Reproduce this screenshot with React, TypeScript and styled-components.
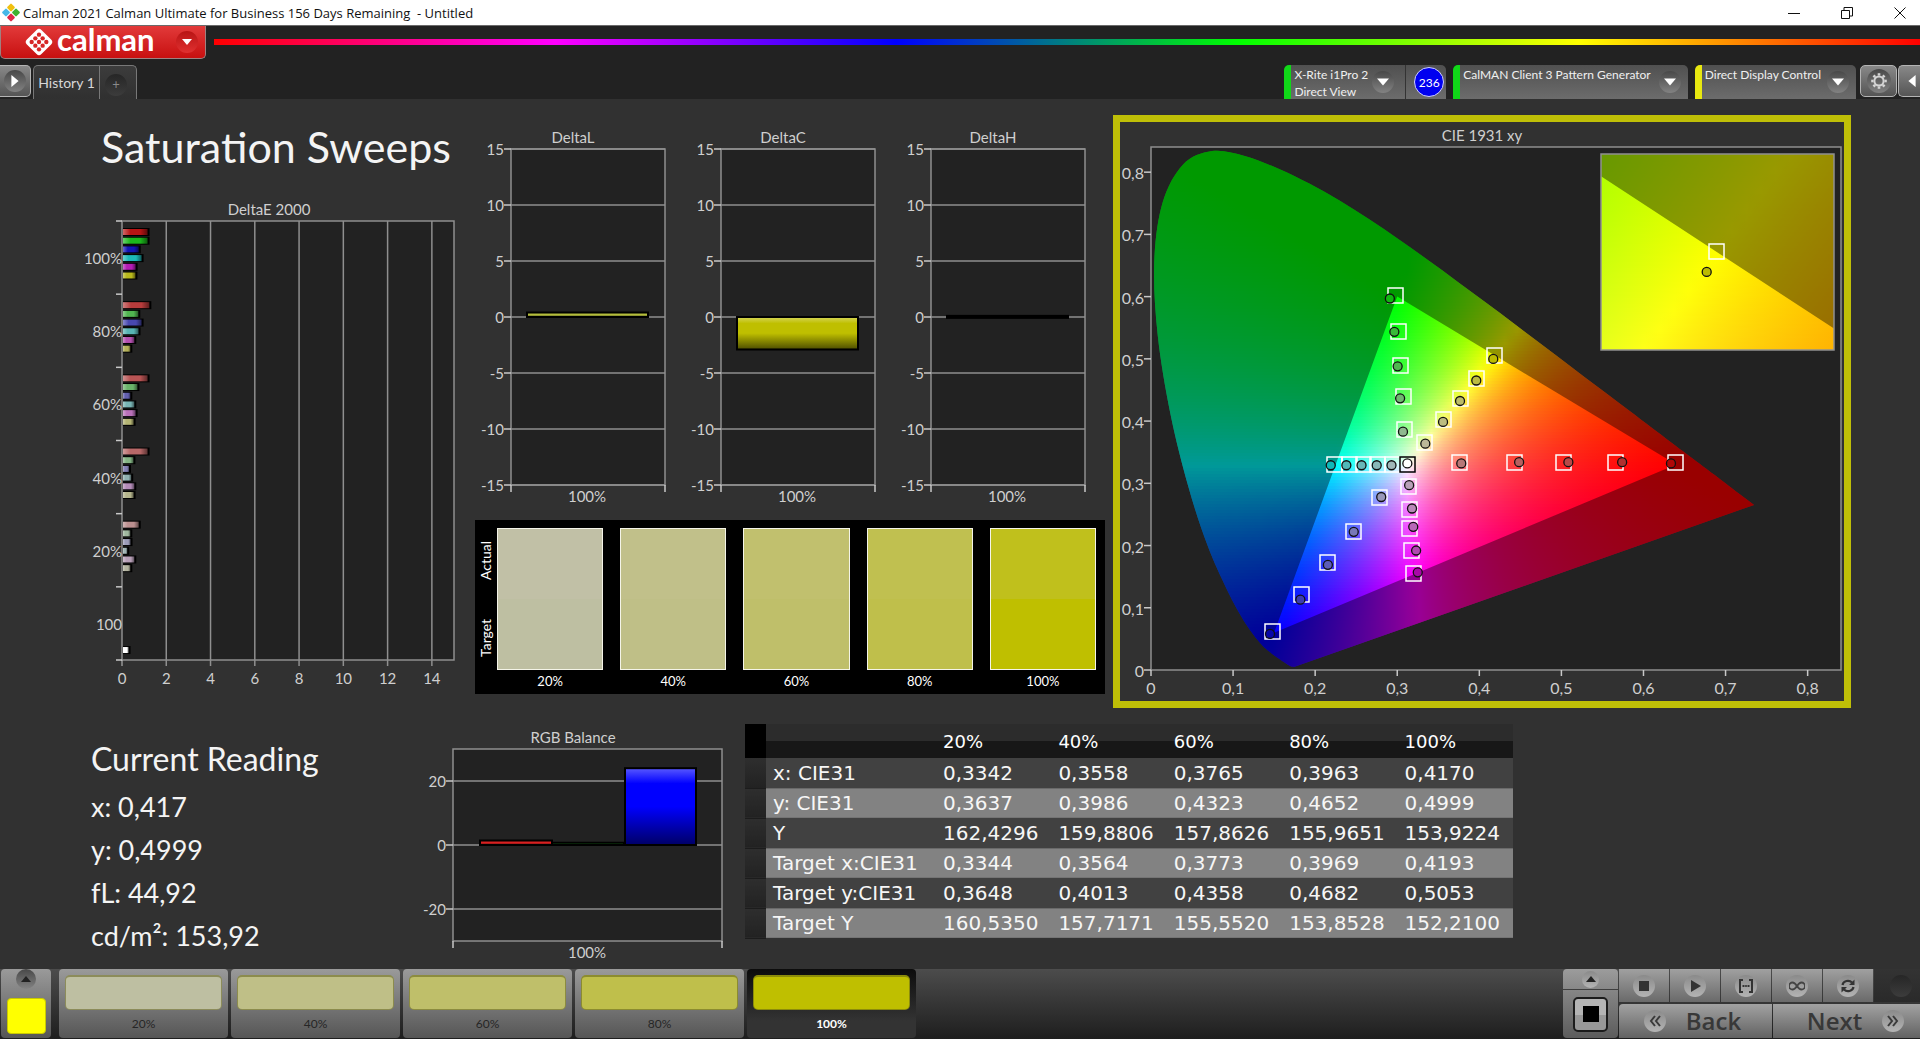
import React from "react";
import styled, { createGlobalStyle, css } from "styled-components";

const GlobalStyle = createGlobalStyle`
  *, *::before, *::after { box-sizing: border-box; }
  body { margin: 0; background: #313131; }
  button { font: inherit; color: inherit; border: 0; padding: 0; margin: 0; cursor: pointer; }
  svg { display: block; }
`;

const uiFont = `Lato, "Open Sans", sans-serif`;

/* ---------- data ---------- */

const levels = [
  { label: "20%", actual: "#c1c0a6", target: "#bebfa2" },
  { label: "40%", actual: "#c1c08a", target: "#bfbf87" },
  { label: "60%", actual: "#c1c06e", target: "#bfbf6a" },
  { label: "80%", actual: "#c0c050", target: "#bfbf4b" },
  { label: "100%", actual: "#c0c01c", target: "#bfbf00" },
];

const tableRows = [
  ["x: CIE31", "0,3342", "0,3558", "0,3765", "0,3963", "0,4170"],
  ["y: CIE31", "0,3637", "0,3986", "0,4323", "0,4652", "0,4999"],
  ["Y", "162,4296", "159,8806", "157,8626", "155,9651", "153,9224"],
  ["Target x:CIE31", "0,3344", "0,3564", "0,3773", "0,3969", "0,4193"],
  ["Target y:CIE31", "0,3648", "0,4013", "0,4358", "0,4682", "0,5053"],
  ["Target Y", "160,5350", "157,7171", "155,5520", "153,8528", "152,2100"],
];

const deltaE = [
  { label: "100%", values: [1.2, 1.2, 0.8, 0.93, 0.66, 0.65], colors: ["#b81414", "#1cb81c", "#1414b4", "#1cb8b8", "#b41cb4", "#b8b81c"] },
  { label: "80%", values: [1.28, 0.78, 0.93, 0.79, 0.6, 0.42], colors: ["#b83c3c", "#50b450", "#4848b0", "#58b4b4", "#b450b0", "#b4b058"] },
  { label: "60%", values: [1.2, 0.74, 0.42, 0.6, 0.66, 0.57], colors: ["#b85454", "#6ab46a", "#6460b0", "#78b4b4", "#b870b8", "#b4b474"] },
  { label: "40%", values: [1.2, 0.56, 0.36, 0.46, 0.6, 0.57], colors: ["#b86868", "#84b484", "#8480b4", "#90b0b0", "#b48cb8", "#b4b48c"] },
  { label: "20%", values: [0.8, 0.42, 0.43, 0.28, 0.6, 0.42], colors: ["#bc9090", "#a0b8a0", "#9c9cb8", "#a0b4b4", "#b8a0b8", "#b4b4a0"] },
  { label: "100", values: [0, 0, 0, 0, 0, 0, 0.34], colors: ["", "", "", "", "", "", "#ffffff"] },
];

type Pt = [number, number];

const targets: Pt[] = [
  [0.309, 0.386], [0.308, 0.439], [0.304, 0.489], [0.302, 0.543], [0.2985, 0.601],
  [0.3344, 0.3648], [0.3564, 0.4013], [0.3773, 0.4358], [0.3969, 0.4682], [0.4193, 0.5053],
  [0.295, 0.329], [0.277, 0.329], [0.2595, 0.329], [0.242, 0.329], [0.224, 0.329],
  [0.377, 0.332], [0.4435, 0.332], [0.503, 0.332], [0.5665, 0.332], [0.6395, 0.332],
  [0.3145, 0.2945], [0.316, 0.2575], [0.316, 0.227], [0.318, 0.192], [0.32, 0.155],
  [0.279, 0.276], [0.247, 0.222], [0.2155, 0.1715], [0.184, 0.12], [0.1485, 0.0615],
];

const readings: { at: Pt; color: string }[] = [
  { at: [0.307, 0.383], color: "#8fb88f" }, { at: [0.3035, 0.4365], color: "#70b870" },
  { at: [0.3005, 0.488], color: "#4fb84f" }, { at: [0.2965, 0.5435], color: "#38b838" },
  { at: [0.291, 0.597], color: "#10b810" },
  { at: [0.3342, 0.3637], color: "#bcb898" }, { at: [0.3558, 0.3986], color: "#bcbc80" },
  { at: [0.3765, 0.4323], color: "#bcbc68" }, { at: [0.3963, 0.4652], color: "#bcbc40" },
  { at: [0.417, 0.4999], color: "#bcbc00" },
  { at: [0.293, 0.329], color: "#a0b8b8" }, { at: [0.275, 0.329], color: "#88b8b8" },
  { at: [0.2565, 0.329], color: "#68b8b8" }, { at: [0.238, 0.329], color: "#50b8b8" },
  { at: [0.219, 0.329], color: "#10b8b8" },
  { at: [0.378, 0.332], color: "#b87878" }, { at: [0.4485, 0.334], color: "#b86060" },
  { at: [0.5085, 0.334], color: "#b84848" }, { at: [0.574, 0.334], color: "#b03030" },
  { at: [0.6335, 0.332], color: "#b00808" },
  { at: [0.3145, 0.297], color: "#b8a0b8" }, { at: [0.318, 0.2595], color: "#b888b8" },
  { at: [0.3195, 0.23], color: "#b868b8" }, { at: [0.323, 0.192], color: "#b048b0" },
  { at: [0.325, 0.157], color: "#a808a8" },
  { at: [0.2805, 0.278], color: "#9898b8" }, { at: [0.247, 0.222], color: "#7878b8" },
  { at: [0.2155, 0.169], color: "#5c5cb8" }, { at: [0.182, 0.113], color: "#3c3cb0" },
  { at: [0.145, 0.058], color: "#0808a8" },
];

const locus: Pt[] = [
  [0.1741, 0.005], [0.1689, 0.0069], [0.1566, 0.0177], [0.144, 0.0297], [0.1355, 0.0399],
  [0.1241, 0.0578], [0.1096, 0.0868], [0.0913, 0.1327], [0.0687, 0.2007], [0.0454, 0.295],
  [0.0235, 0.4127], [0.0082, 0.5384], [0.0039, 0.6548], [0.0139, 0.7502], [0.0389, 0.812],
  [0.0743, 0.8338], [0.1142, 0.8262], [0.1547, 0.8059], [0.1929, 0.7816], [0.2296, 0.7543],
  [0.2658, 0.7243], [0.3016, 0.6923], [0.3373, 0.6589], [0.3731, 0.6245], [0.4087, 0.5896],
  [0.4441, 0.5547], [0.4788, 0.5202], [0.5125, 0.4866], [0.5448, 0.4544], [0.5752, 0.4242],
  [0.6029, 0.3965], [0.627, 0.3725], [0.6482, 0.3514], [0.6801, 0.3197], [0.7006, 0.2993],
  [0.726, 0.274], [0.7347, 0.2653],
];

const gamut: Pt[] = [[0.3, 0.6], [0.64, 0.33], [0.15, 0.06]];

/* ---------- window chrome ---------- */

const Window = styled.div`
  min-height: 100vh;
  display: flex;
  flex-direction: column;
  background: #313131;
  color: #e6e6e6;
  font-family: ${uiFont};
  overflow: hidden;
`;

const TitleBar = styled.header`
  display: flex;
  align-items: center;
  height: 25px;
  padding: 0 0 0 2px;
  background: #fff;
  color: #111;
  font-family: "Open Sans", "Noto Sans", sans-serif;
`;

const WindowTitle = styled.span`
  flex: 1;
  padding-left: 3px;
  font-size: 13px;
  white-space: pre;
`;

const WindowButtons = styled.div`
  display: flex;
  gap: 13px;
`;

const WindowButton = styled.button`
  display: grid;
  place-items: center;
  width: 40px;
  height: 25px;
  background: transparent;
`;

const BrandBar = styled.div`
  display: flex;
  align-items: flex-start;
  gap: 8px;
  height: 40px;
  background: #222;
  border-top: 1px solid #6a6a6a;
`;

const BrandButton = styled.button`
  display: flex;
  align-items: center;
  width: 206px;
  height: 33px;
  padding: 0 7px 0 22px;
  border: 1px solid #a08080;
  border-top: 0;
  border-radius: 0 0 5px 5px;
  background: linear-gradient(#e23a3a, #c81010);
  color: #fff;
`;

const BrandName = styled.span`
  flex: 1;
  padding: 0 0 6px 2px;
  text-align: left;
  font-family: Lato, sans-serif;
  font-size: 31px;
  font-weight: 700;
  line-height: 30px;
`;

const Knob = styled.span<{ $size: number; $tone?: "red" | "dark" | "light" | "off" }>`
  display: grid;
  place-items: center;
  flex: none;
  width: ${(p) => p.$size}px;
  height: ${(p) => p.$size}px;
  border-radius: 50%;
  background: ${(p) =>
    p.$tone === "red"
      ? "linear-gradient(#b81414, #e03030)"
      : p.$tone === "light"
        ? "linear-gradient(#8a8a8a, #b4b4b4)"
        : p.$tone === "off"
          ? "linear-gradient(#262626, #3c3c3c)"
          : "linear-gradient(#484848, #828282)"};
`;

const Spectrum = styled.div`
  flex: 1;
  height: 6px;
  margin-top: 13px;
  background: linear-gradient(to right, #f00, #f0f 20%, #00f 40%, #0f0 60%, #ff0 80%, #f00);
`;

const TabBar = styled.nav`
  display: flex;
  align-items: flex-end;
  height: 34px;
  background: #222;
  font-size: 13px;
  line-height: 17px;
`;

const SideButton = styled.button<{ $side?: "left" | "right" }>`
  display: grid;
  place-items: center;
  align-self: flex-start;
  flex: none;
  width: ${(p) => (p.$side ? 31 : 37)}px;
  height: 32px;
  border: 1px solid #b4b4b4;
  border-radius: 5px;
  background: linear-gradient(#888, #555);
  ${(p) => p.$side === "left" && css`border-left: 0; border-radius: 0 5px 5px 0;`}
  ${(p) => p.$side === "right" && css`width: 22px; padding-left: 5px; border-right: 0; border-radius: 5px 0 0 5px;`}
`;

const HistoryTabs = styled.div`
  display: flex;
  height: 34px;
  margin-left: 2px;
  border: 1px solid #787878;
  border-bottom: 0;
  border-radius: 5px 5px 0 0;
  background: linear-gradient(#3c3c3c, #303030);
`;

const HistoryTab = styled.button`
  display: grid;
  place-items: center;
  width: 66px;
  background: transparent;
  color: #d8d8d8;
  font-size: 14px;
  border-right: 1px solid #787878;
`;

const AddTab = styled.button`
  display: grid;
  place-items: center;
  width: 36px;
  padding: 4px 4px 0 0;
  background: transparent;
  color: #8a8a8a;
`;

const Devices = styled.div`
  display: flex;
  gap: 7px;
  margin-left: auto;
`;

const Device = styled.div<{ $stripe: string }>`
  display: flex;
  height: 34px;
  border-left: 7px solid ${(p) => p.$stripe};
  border-radius: 5px 5px 0 0;
  background: linear-gradient(#505050, #6c6c6c);
  color: #f0f0f0;
`;

const DeviceSelect = styled.button<{ $gap: number }>`
  display: flex;
  align-items: center;
  gap: ${(p) => p.$gap}px;
  padding: 0 7px 0 3px;
  background: transparent;
  text-align: left;
  white-space: nowrap;
`;

const DeviceName = styled.span`
  align-self: flex-start;
  padding-top: 1px;
  font-size: 12px;
`;

const MeterCount = styled.span`
  display: flex;
  align-items: center;
  margin-left: 4px;
  padding: 0 2px 0 8px;
  border-left: 1px solid #333;
`;

const MeterBadge = styled.span`
  display: grid;
  place-items: center;
  width: 30px;
  height: 30px;
  border: 1px solid #d0d0ff;
  border-radius: 50%;
  background: #0000f0;
  color: #fff;
  font-size: 12px;
`;

const EdgeButtons = styled.div`
  display: flex;
  align-self: flex-start;
  gap: 1px;
  margin-left: 4px;
`;

/* ---------- workspace ---------- */

const Workspace = styled.main`
  flex: 1;
  background: #313131;
`;

const UpperRow = styled.div`
  display: grid;
  grid-template-columns: 475fr 630fr 746fr 69fr;
  align-items: start;
`;

const LowerRow = styled.div`
  display: grid;
  grid-template-columns: 405fr 340fr 768fr 407fr;
  align-items: start;
`;

const Column = styled.section`
  min-width: 0;
`;

const PageTitle = styled.h1`
  margin: 0;
  padding-left: 101px;
  font-size: 43px;
  font-weight: 400;
  line-height: 96px;
  color: #f4f4f4;
  white-space: nowrap;
`;

const ChartRow = styled.div`
  display: grid;
  grid-template-columns: repeat(3, 1fr);
  padding-top: 26px;
`;

const Chart = styled.svg<{ $text?: number }>`
  width: 100%;
  height: auto;
  font-family: ${uiFont};
  font-size: ${(p) => p.$text ?? 15}px;
  fill: #cfcfcf;
`;

const SwatchPanel = styled.div`
  display: flex;
  margin-top: 10px;
  height: 174px;
  padding: 8px 9px 0 0;
  background: #000;
  color: #fff;
  font-size: 13px;
`;

const SwatchSides = styled.div`
  display: flex;
  justify-content: space-between;
  width: 22px;
  height: 142px;
  padding: 13px 0;
  writing-mode: vertical-rl;
  transform: rotate(180deg);
  font-size: 14px;
  line-height: 22px;
`;

const SwatchList = styled.div`
  flex: 1;
  display: grid;
  grid-template-columns: repeat(5, 1fr);
  gap: 17px;
`;

const SwatchItem = styled.figure`
  margin: 0;
  text-align: center;
`;

const SwatchColor = styled.div<{ $actual: string; $target: string }>`
  height: 142px;
  border: 1px solid #f4f4e8;
  background: linear-gradient(${(p) => p.$actual} 50%, ${(p) => p.$target} 50%);
`;

const SwatchCaption = styled.figcaption`
  line-height: 22px;
`;

const CiePanel = styled.div`
  margin: 16px 0 0 8px;
  border: 7px solid #bfbf07;
`;

const Reading = styled.section`
  padding: 33px 0 0 91px;
  color: #f4f4f4;
  white-space: nowrap;
`;

const ReadingTitle = styled.h2`
  margin: 0 0 8px;
  font-size: 32px;
  font-weight: 400;
  line-height: 36px;
`;

const ReadingValue = styled.p`
  margin: 0;
  font-size: 27px;
  line-height: 43px;
`;

const RgbSection = styled.section`
  padding-top: 17px;
`;

const DataTable = styled.table`
  width: 100%;
  margin-top: 16px;
  border-collapse: collapse;
  table-layout: fixed;
  font-family: "DejaVu Sans", sans-serif;
  font-size: 20px;
  text-align: left;
  white-space: nowrap;
`;

const GutterCol = styled.col`
  width: 21px;
`;

const NameCol = styled.col`
  width: 170px;
`;

const HeadCell = styled.th`
  height: 34px;
  padding: 0 7px;
  font-size: 18px;
  font-weight: 400;
  color: #fff;
  background: linear-gradient(#2c2c2c 50%, #171717 50%);
`;

const HeadGutter = styled.td`
  padding: 0;
  background: #000;
`;

const Gutter = styled.td`
  padding: 0;
  border-bottom: 1px solid #1c1c1c;
  background: linear-gradient(#2e2e2e, #222);
`;

const rowCell = css`
  height: 30px;
  padding: 0 7px;
  font-weight: 400;
  color: #f6f6f6;
`;

const NameCell = styled.th`
  ${rowCell}
`;

const ValueCell = styled.td`
  ${rowCell}
`;

const Row = styled.tr`
  height: 30px;
  ${NameCell}, ${ValueCell} { background: #414141; }
  &:nth-child(even) ${NameCell}, &:nth-child(even) ${ValueCell} {
    background: #828282;
    box-shadow: inset 0 1px #6a6a6a, inset 0 -1px #747474;
  }
`;

/* ---------- bottom bar ---------- */

const BottomBar = styled.footer`
  display: flex;
  height: 70px;
  padding-left: 1px;
  background: linear-gradient(#4c4c4c, #1e1e1e);
`;

const metal = "linear-gradient(#9a9a9a, #565656)";

const CurrentColor = styled.button`
  display: flex;
  flex-direction: column;
  align-items: center;
  gap: 9px;
  width: 50px;
  height: 69px;
  margin-right: 8px;
  border-radius: 4px;
  background: ${metal};
`;

const CurrentSwatch = styled.span`
  width: 39px;
  height: 36px;
  border: 1px solid #c8c800;
  border-radius: 4px;
  background: #ff0;
`;

const Levels = styled.div`
  display: flex;
  gap: 3px;
`;

const LevelButton = styled.button<{ $active: boolean }>`
  display: flex;
  flex-direction: column;
  width: 169px;
  height: 69px;
  padding: 6px 6px 0;
  border-radius: 4px;
  background: ${(p) => (p.$active ? "linear-gradient(#0c0c0c, #333 75%)" : metal)};
  color: ${(p) => (p.$active ? "#fff" : "#262626")};
  font-size: 12px;
  font-weight: ${(p) => (p.$active ? 700 : 400)};
  line-height: 28px;
  text-align: center;
`;

const LevelColor = styled.span<{ $color: string }>`
  height: 41px;
  border: 1px solid rgba(90, 90, 20, 0.5);
  border-top-width: 2px;
  border-radius: 5px;
  background: ${(p) => p.$color};
`;

const Transport = styled.div`
  display: flex;
  gap: 1px;
  margin-left: auto;
`;

const StopColumn = styled.div`
  display: flex;
  flex-direction: column;
  gap: 1px;
  width: 55px;
  height: 69px;
`;

const StopMenu = styled.button`
  display: grid;
  place-items: center;
  height: 20px;
  border-radius: 4px 4px 0 0;
  background: linear-gradient(#9c9c9c, #888);
`;

const StopButton = styled.button`
  display: grid;
  place-items: center;
  flex: 1;
  border-radius: 0 0 4px 4px;
  background: linear-gradient(#868686, #5c5c5c);
`;

const StopIcon = styled.span`
  display: grid;
  place-items: center;
  width: 35px;
  height: 35px;
  border: 2px solid #1c1c1c;
  border-radius: 5px;
  background: linear-gradient(#b4b4b4 50%, #989898 50%);
  &::after {
    content: "";
    width: 16px;
    height: 16px;
    background: #000;
  }
`;

const ControlGrid = styled.div`
  display: grid;
  grid-template-columns: 153px 147px;
  gap: 1px;
`;

const ToolRow = styled.div`
  grid-column: 1 / -1;
  display: grid;
  grid-template-columns: repeat(5, 50px) 46px;
  gap: 1px;
  height: 33px;
`;

const ToolButton = styled.button<{ $off?: boolean }>`
  display: grid;
  place-items: center;
  padding-left: ${(p) => (p.$off ? 8 : 0)}px;
  background: ${(p) => (p.$off ? "linear-gradient(#333, #2a2a2a)" : "linear-gradient(#a0a0a0, #6a6a6a)")};
`;

const NavButton = styled.button<{ $forward?: boolean }>`
  display: flex;
  align-items: center;
  justify-content: center;
  gap: 20px;
  height: 34px;
  padding: ${(p) => (p.$forward ? "0 0 0 18px" : "0 6px 0 0")};
  border-radius: ${(p) => (p.$forward ? 0 : "4px 0 0 0")};
  background: linear-gradient(#a2a2a2, #626262);
  color: #383838;
  font-family: "Open Sans", sans-serif;
  font-size: 24px;
  font-weight: 600;
  line-height: 32px;
`;

/* ---------- icons ---------- */

const Triangle = ({ dir, size = 10, color = "#fff" }: { dir: "up" | "down" | "left" | "right"; size?: number; color?: string }) => {
  const d = {
    down: "M0 2H10L5 8Z",
    up: "M0 8H10L5 2Z",
    right: "M2 0V10L8 5Z",
    left: "M8 0V10L2 5Z",
  }[dir];
  return (
    <svg width={size} height={size} viewBox="0 0 10 10" aria-hidden="true">
      <path d={d} fill={color} />
    </svg>
  );
};

const AppIcon = () => (
  <svg width="18" height="19" viewBox="0 0 18 18" aria-hidden="true">
    <rect x="6" y="1" width="6" height="6" rx="1" transform="rotate(45 9 4)" fill="#f0c010" />
    <rect x="1" y="6" width="6" height="6" rx="1" transform="rotate(45 4 9)" fill="#48b8e8" />
    <rect x="11" y="6" width="6" height="6" rx="1" transform="rotate(45 14 9)" fill="#40b030" />
    <rect x="6" y="11" width="6" height="6" rx="1" transform="rotate(45 9 14)" fill="#e02848" />
  </svg>
);

const BrandIcon = () => (
  <svg width="32" height="32" viewBox="0 0 28 28" aria-hidden="true">
    <rect x="5" y="5" width="18" height="18" rx="3" transform="rotate(45 14 14)" fill="#fff" />
    <g fill="#d62626">
      <circle cx="14" cy="7.6" r="1.9" />
      <circle cx="10.8" cy="10.8" r="1.9" />
      <circle cx="17.2" cy="10.8" r="1.9" />
      <circle cx="7.6" cy="14" r="1.9" />
      <circle cx="14" cy="14" r="1.9" />
      <circle cx="20.4" cy="14" r="1.9" />
      <circle cx="10.8" cy="17.2" r="1.9" />
      <circle cx="17.2" cy="17.2" r="1.9" />
      <circle cx="14" cy="20.4" r="1.9" />
    </g>
  </svg>
);

const GearIcon = () => (
  <svg width="18" height="18" viewBox="0 0 18 18" aria-hidden="true" fill="none" stroke="#d4d4d4">
    <circle cx="9" cy="9" r="4.6" strokeWidth="2" />
    {[0, 45, 90, 135, 180, 225, 270, 315].map((a) => (
      <path key={a} d="M9 3.6V1.2" strokeWidth="2.6" transform={`rotate(${a} 9 9)`} />
    ))}
  </svg>
);

const Chevrons = ({ flip }: { flip?: boolean }) => (
  <svg width="12" height="12" viewBox="0 0 12 12" fill="none" stroke="#3a3a3a" strokeWidth="2" aria-hidden="true">
    <path d={flip ? "M1 1L5 6L1 11M6 1L10 6L6 11" : "M6 1L2 6L6 11M11 1L7 6L11 11"} />
  </svg>
);

const toolIcons: { name: string; icon: React.ReactNode }[] = [
  { name: "Stop", icon: <rect x="3" y="3" width="10" height="10" fill="#333" /> },
  { name: "Play", icon: <path d="M4 2V14L14 8Z" fill="#333" /> },
  {
    name: "Read series",
    icon: (
      <g fill="none" stroke="#333" strokeWidth="2">
        <path d="M5 2H2V14H5M11 2H14V14H11" />
        <path d="M4.5 8H6.5M7.2 8H8.8M9.5 8H11.5" />
      </g>
    ),
  },
  {
    name: "Read continuous",
    icon: <path d="M8 8C6 5 5 4.500 3.500 4.500A3.500 3.500 0 0 0 3.500 11.500C5 11.500 6 11 8 8S11 4.500 12.500 4.500A3.500 3.500 0 0 1 12.500 11.500C11 11.500 10 11 8 8Z" fill="none" stroke="#444" strokeWidth="1.800" />,
  },
  {
    name: "Refresh",
    icon: (
      <g>
        <path d="M2.500 7A5.500 5 0 0 1 12 4.500M13.500 9A5.500 5 0 0 1 4 11.500" fill="none" stroke="#333" strokeWidth="2.200" />
        <path d="M14.500 1.500V7H9ZM1.500 14.500V9H7Z" fill="#333" />
      </g>
    ),
  },
];

/* ---------- charts ---------- */

const shade = (hex: string, k: number) =>
  "#" +
  [1, 3, 5]
    .map((i) => parseInt(hex.slice(i, i + 2), 16))
    .map((v) => Math.round(k < 0 ? v * (1 + k) : v + (255 - v) * k).toString(16).padStart(2, "0"))
    .join("");

const axis = "#8f8f8f";
const tick = "#c8c8c8";

function DeltaEChart() {
  const left = 122, right = 454, top = 26, bottom = 465;
  const unit = (right - left) / 15;
  const band = (bottom - top) / deltaE.length;
  return (
    <Chart viewBox="0 0 475 500" role="img" aria-label="DeltaE 2000">
      <text x="269" y="20" textAnchor="middle">DeltaE 2000</text>
      <rect x={left} y={top} width={right - left} height={bottom - top} fill="#222" />
      {[2, 4, 6, 8, 10, 12, 14].map((v) => (
        <line key={v} x1={left + v * unit} x2={left + v * unit} y1={top} y2={bottom + 6} stroke={axis} strokeWidth="1.5" />
      ))}
      {deltaE.map((g, gi) =>
        g.values.map((v, i) => {
          if (!v) return null;
          const y = top + gi * band + 11 + i * 8.7;
          const id = `de-${gi}-${i}`;
          return (
            <g key={id}>
              <linearGradient id={id}>
                <stop offset="0" stopColor={shade(g.colors[i], 0.35)} />
                <stop offset="0.3" stopColor={g.colors[i]} />
                <stop offset="0.7" stopColor={g.colors[i]} />
                <stop offset="1" stopColor={shade(g.colors[i], -0.5)} />
              </linearGradient>
              <rect x={left} y={y - 4} width={v * unit + 1} height="8" fill="#000" />
              <rect x={left + 1} y={y - 3} width={v * unit - 2} height="6" fill={`url(#${id})`} />
            </g>
          );
        })
      )}
      <rect x={left} y={top} width={right - left} height={bottom - top} fill="none" stroke={axis} strokeWidth="1.5" />
      {[0, 1, 2, 3, 4, 5, 6].map((i) => (
        <line key={i} x1={left - 6} x2={left} y1={top + i * band} y2={top + i * band} stroke={tick} strokeWidth="1.5" />
      ))}
      <line x1={left} x2={left} y1={bottom} y2={bottom + 6} stroke={tick} />
      {deltaE.map((g, i) => (
        <text key={g.label} x={left} y={top + i * band + 43} textAnchor="end">{g.label}</text>
      ))}
      {[0, 2, 4, 6, 8, 10, 12, 14].map((v) => (
        <text key={v} x={left + v * unit} y={bottom + 24} textAnchor="middle">{v}</text>
      ))}
    </Chart>
  );
}

type Bar = { x: number; w: number; value: number; color: string };

type BarChartProps = {
  title: string;
  titleX: number;
  labelX: number;
  width: number;
  height: number;
  left: number;
  right: number;
  top: number;
  bottom: number;
  max: number;
  ticks: number[];
  bars: Bar[];
};

function BarChart({ title, titleX, labelX, width, height, left, right, top, bottom, max, ticks, bars }: BarChartProps) {
  const unit = (bottom - top) / (2 * max);
  const toY = (v: number) => (top + bottom) / 2 - v * unit;
  return (
    <Chart viewBox={`0 0 ${width} ${height}`} role="img" aria-label={title}>
      <text x={titleX} y={top - 6} textAnchor="middle">{title}</text>
      <rect x={left} y={top} width={right - left} height={bottom - top} fill="#222" stroke={axis} strokeWidth="1.5" />
      {ticks.map((v) => (
        <g key={v}>
          <line x1={left} x2={right} y1={toY(v)} y2={toY(v)} stroke={axis} strokeWidth="1.5" />
          <line x1={left - 7} x2={left} y1={toY(v)} y2={toY(v)} stroke={tick} strokeWidth="1.5" />
          <text x={left - 7} y={toY(v) + 6} textAnchor="end">{v}</text>
        </g>
      ))}
      <path d={`M${left} ${bottom}v7M${right} ${bottom}v7`} stroke={tick} strokeWidth="1.5" />
      {bars.map((b, i) => {
        const y = Math.min(toY(0), toY(b.value));
        const h = Math.max(2, Math.abs(b.value) * unit);
        const id = `${title.replace(" ", "")}-${i}`;
        return (
          <g key={id}>
            <linearGradient id={id} x2="0" y2="1">
              <stop offset="0" stopColor={shade(b.color, 0.35)} />
              <stop offset="0.2" stopColor={b.color} />
              <stop offset="0.5" stopColor={b.color} />
              <stop offset="1" stopColor={shade(b.color, -0.6)} />
            </linearGradient>
            <rect x={b.x} y={y} width={b.w} height={h} fill={`url(#${id})`} stroke="#000" strokeWidth="2" />
          </g>
        );
      })}
      <text x={labelX} y={bottom + 17} textAnchor="middle">100%</text>
    </Chart>
  );
}

const chromaColor = (x: number, yIn: number) => {
  const y = Math.max(yIn, 0.002);
  const X = x / y;
  const Z = (1 - x - y) / y;
  const rgb = [
    3.2406 * X - 1.5372 - 0.4986 * Z,
    -0.9689 * X + 1.8758 + 0.0415 * Z,
    0.0557 * X - 0.204 + 1.057 * Z,
  ].map((v) => Math.max(0, v));
  const m = Math.max(...rgb);
  return `rgb(${rgb.map((v) => Math.round((v / m) * 255)).join(",")})`;
};

/* Smooth open curve through the points, closed by a straight line. */
const smoothPath = (pts: Pt[]) => {
  const f = (n: number) => n.toFixed(1);
  let d = `M${f(pts[0][0])} ${f(pts[0][1])}`;
  for (let i = 0; i < pts.length - 1; i++) {
    const p0 = pts[Math.max(0, i - 1)];
    const p1 = pts[i];
    const p2 = pts[i + 1];
    const p3 = pts[Math.min(pts.length - 1, i + 2)];
    d += `C${f(p1[0] + (p2[0] - p0[0]) / 6)} ${f(p1[1] + (p2[1] - p0[1]) / 6)} ${f(p2[0] - (p3[0] - p1[0]) / 6)} ${f(p2[1] - (p3[1] - p1[1]) / 6)} ${f(p2[0])} ${f(p2[1])}`;
  }
  return d + "Z";
};

type FieldProps = { id: string; x: number; y: number; w: number; h: number; step: number; stops: number; toChroma: (px: number, py: number) => Pt };

/* Paints the chromaticity plane as thin rows, each with its own gradient. */
function ChromaField({ id, x, y, w, h, step, stops, toChroma }: FieldProps) {
  const rows = Array.from({ length: Math.ceil(h / step) }, (_, i) => y + i * step);
  return (
    <g shapeRendering="crispEdges">
      {rows.map((ry, r) => (
        <g key={r}>
          <linearGradient id={`${id}${r}`} gradientUnits="userSpaceOnUse" x1={x} x2={x + w} y1="0" y2="0">
            {Array.from({ length: stops + 1 }, (_, s) => {
              const [cx, cy] = toChroma(x + (w * s) / stops, ry + step / 2);
              return <stop key={s} offset={s / stops} stopColor={chromaColor(cx, cy)} />;
            })}
          </linearGradient>
          <rect x={x} y={ry} width={w} height={Math.min(step, y + h - ry)} fill={`url(#${id}${r})`} />
        </g>
      ))}
    </g>
  );
}

const Target = ({ x, y, color = "#fff" }: { x: number; y: number; color?: string }) => (
  <rect x={Math.round(x) - 8} y={Math.round(y) - 8} width="15" height="15" fill="none" stroke={color} strokeWidth="1.5" />
);

function CieChart() {
  const left = 31, right = 721, top = 25, bottom = 548;
  const ux = 820.8, uy = 622.3;
  const px = (x: number) => left + x * ux;
  const py = (y: number) => bottom - y * uy;
  const path = (pts: Pt[]) => "M" + pts.map(([x, y]) => `${px(x).toFixed(1)} ${py(y).toFixed(1)}`).join("L") + "Z";

  const inset = { x: 481, y: 32, w: 233, h: 196 };
  const kx = 4478, ky = 3685;
  const ix = (x: number) => 597 + (x - 0.4193) * kx;
  const iy = (y: number) => 130 - (y - 0.5053) * ky;
  const insetGamut = "M" + gamut.map(([x, y]) => `${ix(x)} ${iy(y)}`).join("L") + "Z";

  return (
    <Chart $text={16} viewBox="0 0 724 579" role="img" aria-label="CIE 1931 xy">
      <defs>
        <clipPath id="locus"><path d={smoothPath(locus.map(([x, y]): Pt => [px(x), py(y)]))} /></clipPath>
        <clipPath id="inset"><rect x={inset.x} y={inset.y} width={inset.w} height={inset.h} /></clipPath>
      </defs>
      <text x="362" y="19" fontSize="15" textAnchor="middle">CIE 1931 xy</text>
      <rect x={left} y={top} width={right - left} height={bottom - top} fill="#222" stroke={axis} strokeWidth="1.5" />
      <g clipPath="url(#locus)">
        <ChromaField
          id="cf" x={left} y={top} w={610} h={522} step={3} stops={50}
          toChroma={(a, b) => [(a - left) / ux, (bottom - b) / uy]}
        />
        <path d={`M${left} ${top}H${right}V${bottom}H${left}Z${path(gamut)}`} fillRule="evenodd" fill="#000" fillOpacity="0.4" />
      </g>
      {[0, 1, 2, 3, 4, 5, 6, 7, 8].map((n) => {
        const label = n ? `0,${n}` : "0";
        return (
          <g key={n}>
            <line x1={px(n / 10)} x2={px(n / 10)} y1={bottom} y2={bottom + 6} stroke={tick} strokeWidth="1.5" />
            <line x1={left - 7} x2={left} y1={py(n / 10)} y2={py(n / 10)} stroke={tick} strokeWidth="1.5" />
            <text x={px(n / 10)} y={bottom + 24} textAnchor="middle">{label}</text>
            <text x={left - 7} y={py(n / 10) + 7} textAnchor="end">{label}</text>
          </g>
        );
      })}
      {targets.map(([x, y]) => <Target key={`${x}-${y}`} x={px(x)} y={py(y)} />)}
      <Target x={px(0.3127)} y={py(0.329)} color="#000" />
      {readings.map(({ at: [x, y], color }) => (
        <circle key={`${x}-${y}`} cx={px(x)} cy={py(y)} r="4.5" fill={color} stroke="#111" strokeWidth="1.3" />
      ))}
      <circle cx={px(0.3123)} cy={py(0.332)} r="4.5" fill="#fff" stroke="#111" strokeWidth="1.3" />
      <g clipPath="url(#inset)">
        <ChromaField
          id="in" x={inset.x} y={inset.y} w={inset.w} h={inset.h} step={2} stops={16}
          toChroma={(a, b) => [0.4193 + (a - 597) / kx, 0.5053 - (b - 130) / ky]}
        />
        <path d={`M${inset.x} ${inset.y}h${inset.w}v${inset.h}h-${inset.w}Z${insetGamut}`} fillRule="evenodd" fill="#000" fillOpacity="0.4" />
      </g>
      <rect x={inset.x} y={inset.y} width={inset.w} height={inset.h} fill="none" stroke="#909090" strokeWidth="1.5" />
      <Target x={ix(0.4193)} y={iy(0.5053)} />
      <circle cx={ix(0.417)} cy={iy(0.4999)} r="4.5" fill="#bcbc00" stroke="#111" strokeWidth="1.3" />
    </Chart>
  );
}

/* ---------- page ---------- */

const deltaCharts = [
  { title: "DeltaL", value: 0.4, color: "#b4bc3c" },
  { title: "DeltaC", value: -2.9, color: "#bfbf00" },
  { title: "DeltaH", value: 0.1, color: "#000000" },
];

export default function App() {
  return (
    <Window>
      <GlobalStyle />
      <TitleBar>
        <AppIcon />
        <WindowTitle>{"Calman 2021 Calman Ultimate for Business 156 Days Remaining  - Untitled"}</WindowTitle>
        <WindowButtons>
          <WindowButton aria-label="Minimize">
            <svg width="12" height="12" viewBox="0 0 12 12"><path d="M0 6.500H12" stroke="#111" /></svg>
          </WindowButton>
          <WindowButton aria-label="Restore">
            <svg width="12" height="12" viewBox="0 0 12 12" fill="none" stroke="#111">
              <path d="M0.500 3.500H8.500V11.500H0.500ZM3 3V0.500H11.500V9H9" />
            </svg>
          </WindowButton>
          <WindowButton aria-label="Close">
            <svg width="12" height="12" viewBox="0 0 12 12"><path d="M0.500 0.500L11.500 11.500M11.500 0.500L0.500 11.500" stroke="#111" /></svg>
          </WindowButton>
        </WindowButtons>
      </TitleBar>

      <BrandBar>
        <BrandButton>
          <BrandIcon />
          <BrandName>calman</BrandName>
          <Knob $size={22} $tone="red"><Triangle dir="down" /></Knob>
        </BrandButton>
        <Spectrum />
      </BrandBar>

      <TabBar>
        <SideButton $side="left" aria-label="Open side panel">
          <Knob $size={22}><Triangle dir="right" size={12} /></Knob>
        </SideButton>
        <HistoryTabs>
          <HistoryTab>History 1</HistoryTab>
          <AddTab aria-label="Add history"><Knob $size={22} $tone="off">+</Knob></AddTab>
        </HistoryTabs>
        <Devices>
          <Device $stripe="#10d818">
            <DeviceSelect $gap={4}>
              <DeviceName>X-Rite i1Pro 2<br />Direct View</DeviceName>
              <Knob $size={22}><Triangle dir="down" size={12} /></Knob>
            </DeviceSelect>
            <MeterCount><MeterBadge>236</MeterBadge></MeterCount>
          </Device>
          <Device $stripe="#10d818">
            <DeviceSelect $gap={8}>
              <DeviceName>CalMAN Client 3 Pattern Generator</DeviceName>
              <Knob $size={22}><Triangle dir="down" size={12} /></Knob>
            </DeviceSelect>
          </Device>
          <Device $stripe="#e8e810">
            <DeviceSelect $gap={6}>
              <DeviceName>Direct Display Control</DeviceName>
              <Knob $size={22}><Triangle dir="down" size={12} /></Knob>
            </DeviceSelect>
          </Device>
        </Devices>
        <EdgeButtons>
          <SideButton aria-label="Settings"><Knob $size={24}><GearIcon /></Knob></SideButton>
          <SideButton $side="right" aria-label="Open right panel"><Triangle dir="left" size={12} /></SideButton>
        </EdgeButtons>
      </TabBar>

      <Workspace>
        <UpperRow>
          <Column>
            <PageTitle>Saturation Sweeps</PageTitle>
            <DeltaEChart />
          </Column>
          <Column>
            <ChartRow>
              {deltaCharts.map((c) => (
                <BarChart
                  key={c.title}
                  title={c.title} titleX={98} labelX={112}
                  width={210} height={385} left={36} right={190} top={24} bottom={360}
                  max={15} ticks={[15, 10, 5, 0, -5, -10, -15]}
                  bars={[{ x: 52, w: 121, value: c.value, color: c.color }]}
                />
              ))}
            </ChartRow>
            <SwatchPanel>
              <SwatchSides>
                <span>Target</span>
                <span>Actual</span>
              </SwatchSides>
              <SwatchList>
                {levels.map((l) => (
                  <SwatchItem key={l.label}>
                    <SwatchColor $actual={l.actual} $target={l.target} />
                    <SwatchCaption>{l.label}</SwatchCaption>
                  </SwatchItem>
                ))}
              </SwatchList>
            </SwatchPanel>
          </Column>
          <Column>
            <CiePanel><CieChart /></CiePanel>
          </Column>
        </UpperRow>

        <LowerRow>
          <Reading>
            <ReadingTitle>Current Reading</ReadingTitle>
            <ReadingValue>x: 0,417</ReadingValue>
            <ReadingValue>y: 0,4999</ReadingValue>
            <ReadingValue>fL: 44,92</ReadingValue>
            <ReadingValue>cd/m²: 153,92</ReadingValue>
          </Reading>
          <RgbSection>
            <BarChart
              title="RGB Balance" titleX={168} labelX={182}
              width={340} height={236} left={48} right={317} top={24} bottom={216}
              max={30} ticks={[20, 0, -20]}
              bars={[
                { x: 75, w: 72, value: 1.4, color: "#d82020" },
                { x: 147, w: 72, value: 0.7, color: "#208820" },
                { x: 220, w: 71, value: 24, color: "#0000ff" },
              ]}
            />
          </RgbSection>
          <DataTable>
            <colgroup>
              <GutterCol />
              <NameCol />
              {levels.map((l) => <col key={l.label} />)}
            </colgroup>
            <thead>
              <tr>
                <HeadGutter />
                <HeadCell />
                {levels.map((l) => <HeadCell key={l.label} scope="col">{l.label}</HeadCell>)}
              </tr>
            </thead>
            <tbody>
              {tableRows.map(([name, ...values]) => (
                <Row key={name}>
                  <Gutter />
                  <NameCell scope="row">{name}</NameCell>
                  {values.map((v, i) => <ValueCell key={i}>{v}</ValueCell>)}
                </Row>
              ))}
            </tbody>
          </DataTable>
        </LowerRow>
      </Workspace>

      <BottomBar>
        <CurrentColor aria-label="Current color">
          <Knob $size={20}><Triangle dir="up" color="#222" /></Knob>
          <CurrentSwatch />
        </CurrentColor>
        <Levels>
          {levels.map((l, i) => (
            <LevelButton key={l.label} $active={i === 4}>
              <LevelColor $color={l.target} />
              {l.label}
            </LevelButton>
          ))}
        </Levels>
        <Transport>
          <StopColumn>
            <StopMenu aria-label="Stop options"><Knob $size={17} $tone="light"><Triangle dir="up" color="#222" /></Knob></StopMenu>
            <StopButton aria-label="Stop reading"><StopIcon /></StopButton>
          </StopColumn>
          <ControlGrid>
            <ToolRow>
              {toolIcons.map((t) => (
                <ToolButton key={t.name} aria-label={t.name}>
                  <Knob $size={22} $tone="light">
                    <svg width="16" height="16" viewBox="0 0 16 16" aria-hidden="true">{t.icon}</svg>
                  </Knob>
                </ToolButton>
              ))}
              <ToolButton $off aria-label="Record"><Knob $size={22} $tone="off" /></ToolButton>
            </ToolRow>
            <NavButton><Knob $size={22} $tone="light"><Chevrons /></Knob>Back</NavButton>
            <NavButton $forward>Next<Knob $size={22} $tone="light"><Chevrons flip /></Knob></NavButton>
          </ControlGrid>
        </Transport>
      </BottomBar>
    </Window>
  );
}
